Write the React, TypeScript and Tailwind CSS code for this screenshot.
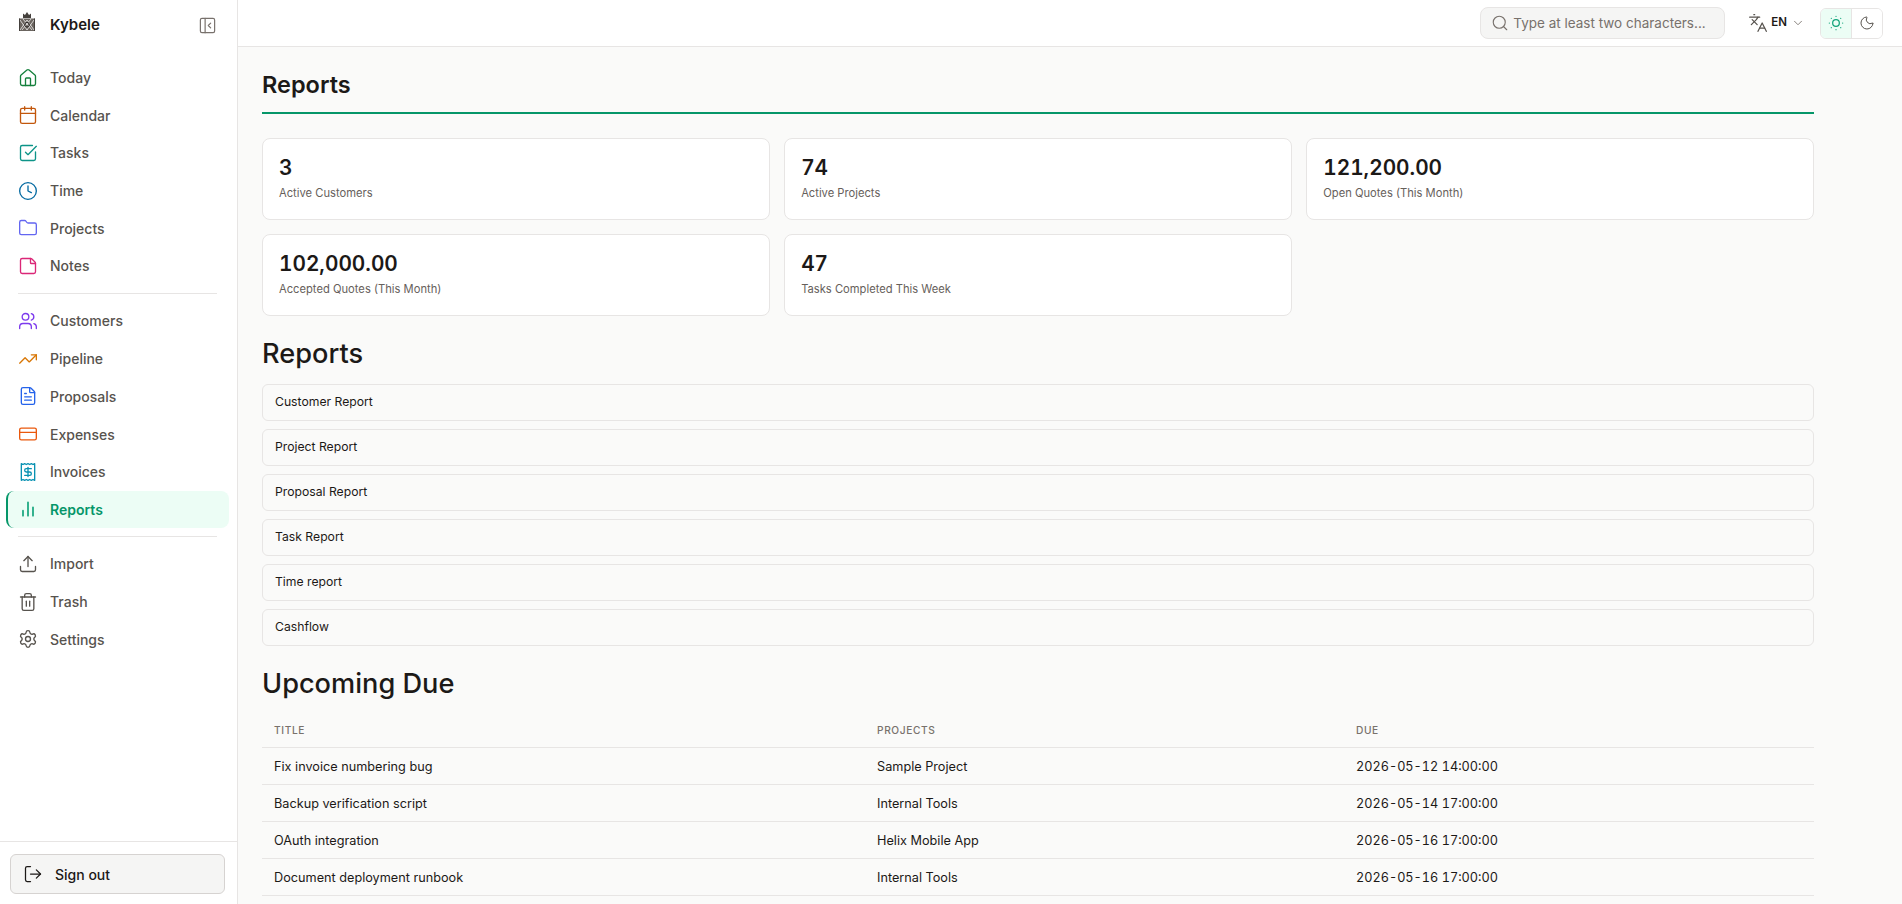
import {
  Calendar,
  ChevronDown,
  Clock,
  CreditCard,
  FileText,
  Folder,
  House,
  Languages,
  LogOut,
  Moon,
  PanelLeftClose,
  Receipt,
  Search,
  Settings,
  SquareCheckBig,
  StickyNote,
  SunDim,
  Trash2,
  TrendingUp,
  Upload,
  Users,
} from 'lucide-react';

const ReportBars = ({ size, className }: { size?: number; strokeWidth?: number; className?: string }) => (
  <svg width={size} height={size} viewBox="0 0 24 24" fill="none" stroke="currentColor" strokeWidth="2" strokeLinecap="round" className={className}>
    <path d="M18 20V10M12 20V4M6 20v-6" />
  </svg>
);

const groupOne = [
  { label: 'Today', icon: House, color: 'text-[#15803d]' },
  { label: 'Calendar', icon: Calendar, color: 'text-[#c2570c]' },
  { label: 'Tasks', icon: SquareCheckBig, color: 'text-[#0d9488]' },
  { label: 'Time', icon: Clock, color: 'text-[#0369a1]' },
  { label: 'Projects', icon: Folder, color: 'text-[#6366f1]' },
  { label: 'Notes', icon: StickyNote, color: 'text-[#db2777]' },
];

const groupTwo = [
  { label: 'Customers', icon: Users, color: 'text-[#7c3aed]' },
  { label: 'Pipeline', icon: TrendingUp, color: 'text-[#d97706]' },
  { label: 'Proposals', icon: FileText, color: 'text-[#2563eb]' },
  { label: 'Expenses', icon: CreditCard, color: 'text-[#ea580c]' },
  { label: 'Invoices', icon: Receipt, color: 'text-[#0891b2]' },
  { label: 'Reports', icon: ReportBars, color: 'text-[#10a37a]', active: true },
];

const groupThree = [
  { label: 'Import', icon: Upload, color: 'text-[#57534e]' },
  { label: 'Trash', icon: Trash2, color: 'text-[#57534e]' },
  { label: 'Settings', icon: Settings, color: 'text-[#57534e]' },
];

const stats = [
  { value: '3', label: 'Active Customers' },
  { value: '74', label: 'Active Projects' },
  { value: '121,200.00', label: 'Open Quotes (This Month)' },
  { value: '102,000.00', label: 'Accepted Quotes (This Month)' },
  { value: '47', label: 'Tasks Completed This Week' },
];

const reportLinks = ['Customer Report', 'Project Report', 'Proposal Report', 'Task Report', 'Time report', 'Cashflow'];

const dueRows = [
  { title: 'Fix invoice numbering bug', project: 'Sample Project', due: '2026-05-12 14:00:00' },
  { title: 'Backup verification script', project: 'Internal Tools', due: '2026-05-14 17:00:00' },
  { title: 'OAuth integration', project: 'Helix Mobile App', due: '2026-05-16 17:00:00' },
  { title: 'Document deployment runbook', project: 'Internal Tools', due: '2026-05-16 17:00:00' },
];

type NavEntry = {
  label: string;
  icon: React.ComponentType<{ size?: number; strokeWidth?: number; className?: string }>;
  color: string;
  active?: boolean;
};

const NavGroup = ({ items }: { items: NavEntry[] }) => (
  <div className="flex flex-col gap-[0.7px]">
    {items.map((item) => (
      <a
        key={item.label}
        className={
          item.active
            ? 'flex h-[37px] items-center gap-3 rounded-lg border-l-2 border-[#059669] bg-[#ecfdf5] pl-[10px] text-[14px] font-semibold text-[#059669]'
            : 'flex h-[37px] items-center gap-3 rounded-lg border-l-2 border-transparent pl-[10px] text-[14px] font-[450] text-[#57534e]'
        }
      >
        <item.icon size={20} strokeWidth={1.6} className={item.color} />
        <span>{item.label}</span>
      </a>
    ))}
  </div>
);

const KybeleLogo = () => (
  <svg width="16" height="19" viewBox="0 0 16 19" fill="none" className="mb-[7px]">
    <path d="M4 6V1.5l2 1.5 2-3 2 3 2-1.5V6z" fill="#44403c" />
    <path d="M0 6.5h16V19H0z" fill="#6b6560" />
    <path d="M1 8l7 10 7-10M1 18l7-10 7 10M4 7l9 11M12 7L3 18" stroke="#fff" strokeWidth="0.7" />
    <circle cx="8" cy="12.7" r="2.4" stroke="#292524" strokeWidth="1" />
    <path d="M0.5 6.5V19M15.5 6.5V19" stroke="#44403c" strokeWidth="1" />
  </svg>
);

const App = () => {
  return (
    <div className="flex h-screen overflow-hidden bg-[#fafaf9] font-[Inter,sans-serif] text-[#1c1917]">
      {/* Sidebar */}
      <aside className="flex w-[238px] shrink-0 flex-col border-r border-[#e7e5e4] bg-white">
        <div className="flex h-[50px] items-center justify-between pl-[19px] pr-[20px]">
          <div className="flex items-center gap-[15px]">
            <KybeleLogo />
            <span className="text-[15px] font-semibold">Kybele</span>
          </div>
          <PanelLeftClose size={19} strokeWidth={1.5} className="text-[#78716c]" />
        </div>
        <nav className="flex-1 pl-[6px] pr-[8px] pt-[9px]">
          <NavGroup items={groupOne} />
          <div className="mx-3 my-[8.5px] border-t border-[#e7e5e4]" />
          <NavGroup items={groupTwo} />
          <div className="mx-3 my-[8.3px] border-t border-[#e7e5e4]" />
          <NavGroup items={groupThree} />
        </nav>
        <div className="border-t border-[#e7e5e4] pb-[10px] pl-[10px] pr-[12px] pt-3">
          <button className="flex h-[40px] w-full items-center gap-3 rounded-md border border-[#d6d3d1] bg-[#f5f5f4] pl-[12px] text-[14px] font-medium">
            <LogOut size={20} strokeWidth={1.5} />
            <span>Sign out</span>
          </button>
        </div>
      </aside>

      <div className="flex min-w-0 flex-1 flex-col">
        {/* Top bar */}
        <header className="flex h-[47px] shrink-0 items-center justify-end border-b border-[#e7e5e4] bg-white pr-[19px]">
          <div className="flex h-[32px] w-[245px] items-center gap-[4px] rounded-lg border border-[#e7e5e4] bg-[#f5f5f4] pl-[10px]">
            <Search size={18} strokeWidth={1.5} className="text-[#78716c]" />
            <span className="text-[13.5px] text-[#78716c]">Type at least two characters...</span>
          </div>
          <div className="ml-[23px] flex items-center">
            <Languages size={20} strokeWidth={1.5} className="text-[#57534e]" />
            <span className="ml-[3px] text-[11.5px] font-semibold">EN</span>
            <ChevronDown size={14} strokeWidth={1.5} className="ml-[4px] text-[#78716c]" />
          </div>
          <div className="ml-[15px] flex h-[31px] w-[63px] overflow-hidden rounded-md border border-[#e7e5e4]">
            <div className="flex w-[31px] items-center justify-center border-r border-[#e7e5e4] bg-[#ecfdf5]">
              <SunDim size={20} strokeWidth={1.5} className="text-[#10a37a]" />
            </div>
            <div className="flex flex-1 items-center justify-center bg-white">
              <Moon size={16} strokeWidth={1.5} className="text-[#57534e]" />
            </div>
          </div>
        </header>

        {/* Content */}
        <main className="flex-1 overflow-hidden pl-[24px] pt-[22px]">
          <div className="w-[1552px]">
            <div className="border-b-2 border-[#059669] pb-[11px]">
              <h1 className="text-[23.5px] font-semibold leading-[32px]">Reports</h1>
            </div>

            <div className="mt-[24px] grid grid-cols-3 gap-[14.4px]">
              {stats.map((stat) => (
                <div key={stat.label} className="h-[81.6px] rounded-lg border border-[#e7e5e4] bg-white px-[16px] pt-[15px]">
                  <div className="text-[20.8px] font-semibold leading-[28px] tabular-nums">{stat.value}</div>
                  <div className="mt-[2px] text-[11.2px] leading-[18px] text-[#66605b]">{stat.label}</div>
                </div>
              ))}
            </div>

            <h2 className="mt-[20px] text-[27.2px] font-medium leading-[36px]">Reports</h2>
            <div className="mt-[12.6px] flex flex-col gap-2">
              {reportLinks.map((link) => (
                <div key={link} className="flex h-[37px] items-center rounded-md border border-[#e7e5e4] px-3 pb-[1px] text-[12.2px]">
                  {link}
                </div>
              ))}
            </div>

            <h2 className="mt-[20px] text-[27.2px] font-medium leading-[36px]">Upcoming Due</h2>
            <table className="mt-[9px] w-full border-collapse text-left text-[12.7px]">
              <thead>
                <tr className="h-[36px] border-b border-[#e7e5e4]">
                  <th className="w-[603px] pl-3 pt-[3px] text-[10.2px] font-medium tracking-[0.06em] text-[#78716c]">TITLE</th>
                  <th className="w-[479px] pl-3 pt-[3px] text-[10.2px] font-medium tracking-[0.06em] text-[#78716c]">PROJECTS</th>
                  <th className="pl-3 pt-[3px] text-[10.2px] font-medium tracking-[0.06em] text-[#78716c]">DUE</th>
                </tr>
              </thead>
              <tbody>
                {dueRows.map((row) => (
                  <tr key={row.title} className="h-[37px] border-b border-[#e7e5e4]">
                    <td className="pl-3 pt-[1px]">{row.title}</td>
                    <td className="pl-3 pt-[1px]">{row.project}</td>
                    <td className="pl-3 pt-[1px] tabular-nums">{row.due}</td>
                  </tr>
                ))}
              </tbody>
            </table>
          </div>
        </main>
      </div>
    </div>
  );
};

export default App;
